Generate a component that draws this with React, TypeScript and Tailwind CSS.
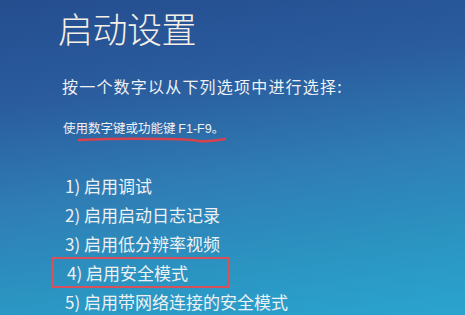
export default function App() {
  const options = [
    '1) 启用调试',
    '2) 启用启动日志记录',
    '3) 启用低分辨率视频',
    '4) 启用安全模式',
    '5) 启用带网络连接的安全模式',
  ];

  return (
    <div
      className="w-[465px] h-[315px] overflow-hidden bg-[linear-gradient(172deg,#244d8e_0%,#2a5c9e_28%,#2f7db4_55%,#2b95c2_80%,#2aa4cf_100%)] text-[#eef1f4]"
      style={{ fontFamily: '"Noto Sans CJK SC", "Noto Sans", sans-serif' }}
    >
      <div className="pl-[58px] pt-[3px] flex flex-col">
        <h1 className="text-[35px] leading-[50px] font-light text-[#f6efe6] tracking-[-0.5px]">启动设置</h1>

        <p className="mt-[22px] ml-[4px] text-[16px] leading-[22px] tracking-[1.2px]">按一个数字以从下列选项中进行选择:</p>

        <div className="mt-[23px] ml-[5px] flex flex-col w-fit">
          <p className="text-[12.5px] leading-[16px]">
            使用数字键或功能键 <span style={{ fontFamily: '"Liberation Sans", sans-serif' }}>F1-F9</span>。
          </p>
          <svg width="150" height="8" viewBox="0 0 150 8" className="ml-[14px] -mt-[1px]">
            <path d="M2 4 Q40 2 90 3 Q110 3 122 5 Q130 6 148 3" stroke="#d8424c" strokeWidth="2.5" fill="none" strokeLinecap="round" />
          </svg>
        </div>

        <ul className="mt-[27px] flex flex-col">
          {options.map((o, i) => (
            <li
              key={o}
              className={
                i === 3
                  ? '-ml-[6px] pl-[13px] w-[177px] h-[31px] leading-[27px] border-2 border-[#d9505a] text-[17px] my-[-1px]'
                  : 'pl-[7px] h-[29px] leading-[29px] text-[17px]'
              }
            >
              {o}
            </li>
          ))}
        </ul>
      </div>
    </div>
  );
}
